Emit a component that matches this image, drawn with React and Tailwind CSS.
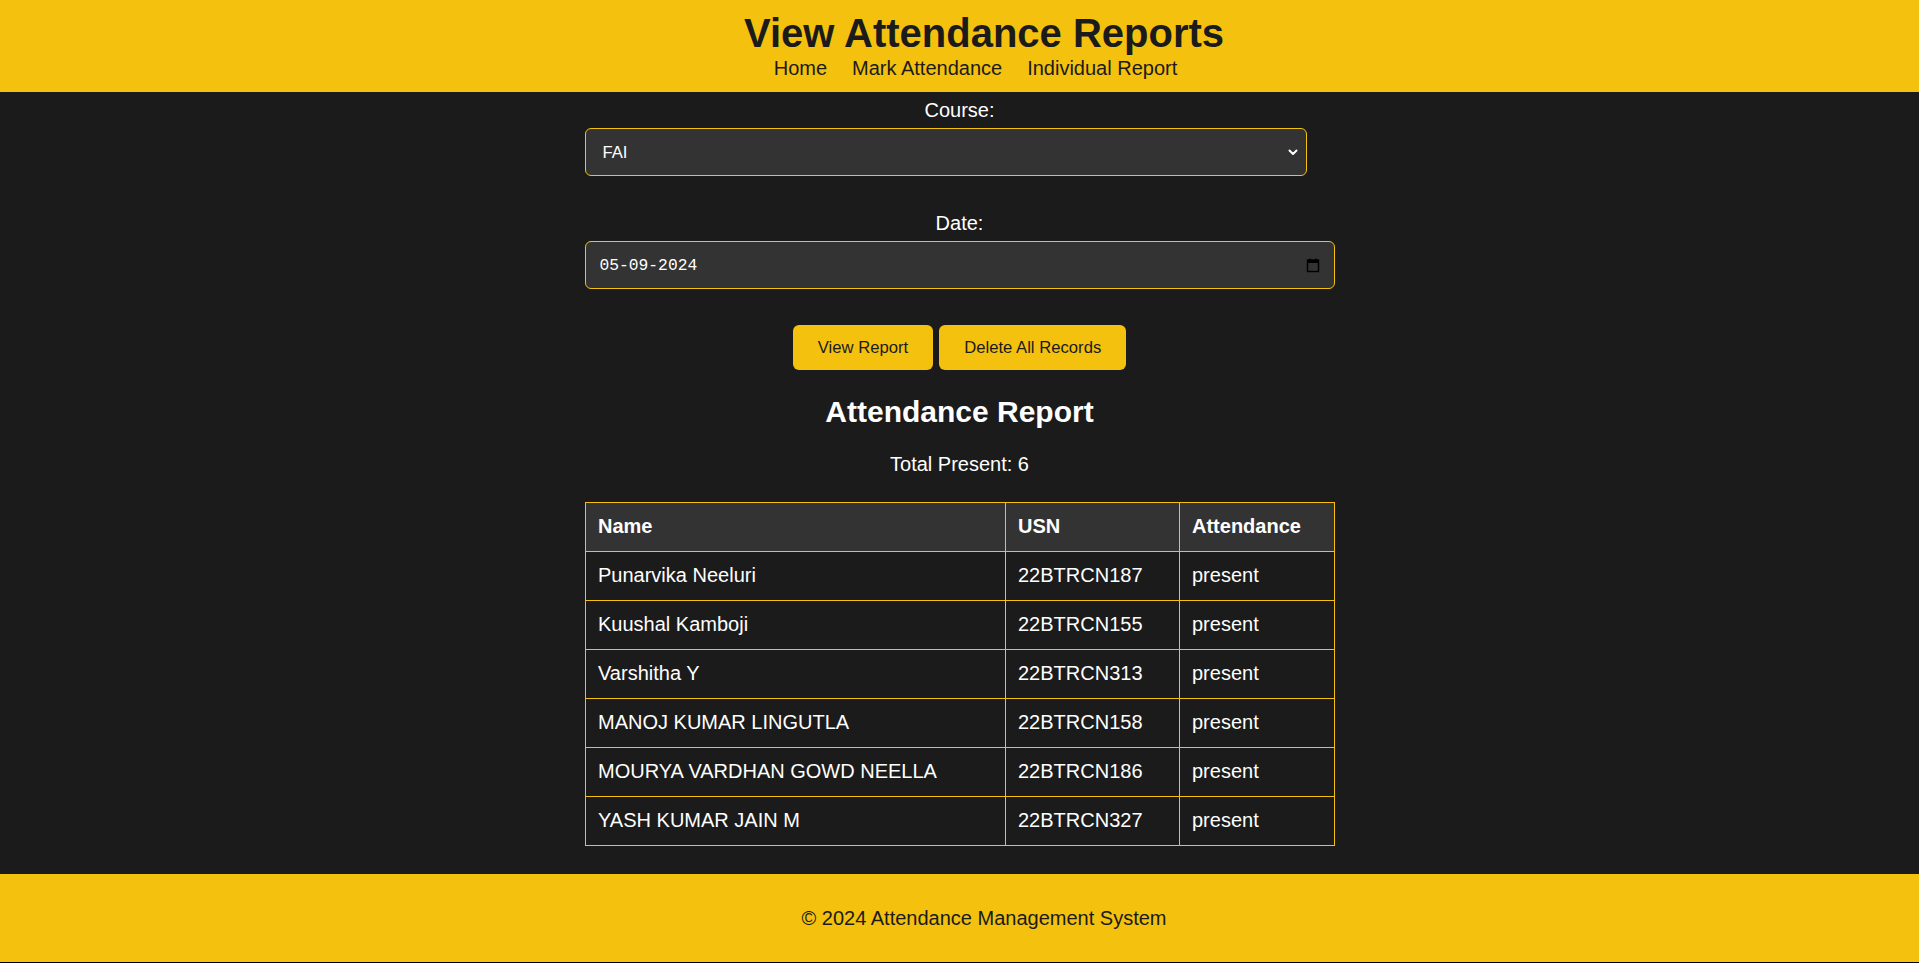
const rows = [
  { name: 'Punarvika Neeluri', usn: '22BTRCN187', status: 'present' },
  { name: 'Kuushal Kamboji', usn: '22BTRCN155', status: 'present' },
  { name: 'Varshitha Y', usn: '22BTRCN313', status: 'present' },
  { name: 'MANOJ KUMAR LINGUTLA', usn: '22BTRCN158', status: 'present' },
  { name: 'MOURYA VARDHAN GOWD NEELLA', usn: '22BTRCN186', status: 'present' },
  { name: 'YASH KUMAR JAIN M', usn: '22BTRCN327', status: 'present' },
]

function Chevron() {
  return (
    <svg width="10" height="7" viewBox="0 0 10 7" fill="none">
      <path d="M1.5 1.5 L5 5 L8.5 1.5" stroke="#ffffff" strokeWidth="2" strokeLinecap="round" strokeLinejoin="round" />
    </svg>
  )
}

function CalendarIcon() {
  return (
    <svg width="14" height="16" viewBox="0 0 14 16" fill="none">
      <rect x="1.5" y="3" width="11" height="11.5" stroke="#000000" strokeWidth="1.4" />
      <rect x="1.5" y="3" width="11" height="3" fill="#000000" />
      <path d="M4 1.5 V3.5 M10 1.5 V3.5" stroke="#000000" strokeWidth="1.4" />
    </svg>
  )
}

export default function App() {
  return (
    <div className="bg-black pb-px font-['Liberation_Sans',Arial,sans-serif]">
      <header className="bg-[#f4c10f] text-[#1b1b1b] pt-[10px] pb-[12px] text-center">
        <h1 className="text-[40px] leading-[46px] font-bold pl-[49px]">View Attendance Reports</h1>
        <nav className="flex justify-center gap-[25px] text-[20px] leading-[23px] pt-[1px] pl-[32px]">
          <a href="#">Home</a>
          <a href="#">Mark Attendance</a>
          <a href="#">Individual Report</a>
        </nav>
      </header>

      <main className="bg-[#1b1b1b] text-white pt-[7px] pb-[28px]">
        <div className="w-[750px] mx-auto">
          <div className="text-[20px] leading-[23px] text-center mb-[6px]">Course:</div>
          <div className="w-[722px] h-[48px] bg-[#333333] border border-[#f4c10f] rounded-[6px] flex items-center justify-between pl-[17px] pr-[8px] text-[16.67px]">
            <span>FAI</span>
            <Chevron />
          </div>

          <div className="text-[20px] leading-[23px] text-center mt-[36px] mb-[6px]">Date:</div>
          <div className="w-full h-[48px] bg-[#333333] border border-[#f4c10f] rounded-[6px] flex items-center justify-between pl-[14px] pr-[14px] text-[16.3px] font-['Liberation_Mono','DejaVu_Sans_Mono',monospace]">
            <span className="pt-[2px]">05-09-2024</span>
            <CalendarIcon />
          </div>

          <div className="flex justify-center gap-[6px] mt-[36px]">
            <button className="bg-[#f4c10f] text-[#1b1b1b] rounded-[6px] h-[45px] px-[25px] text-[16.67px]">View Report</button>
            <button className="bg-[#f4c10f] text-[#1b1b1b] rounded-[6px] h-[45px] px-[25px] text-[16.67px]">Delete All Records</button>
          </div>

          <h2 className="text-[30px] leading-[35px] font-bold text-center mt-[24px]">Attendance Report</h2>
          <p className="text-[20px] leading-[23px] text-center mt-[24px]">Total Present: 6</p>

          <table className="w-[750px] table-fixed border-collapse mt-[26px] text-[20px] leading-[23px]">
            <thead>
              <tr className="bg-[#333333]">
                <th className="w-[420px] border border-[#f4c10f] px-[12.5px] pt-[12px] pb-[13px] text-left font-bold">Name</th>
                <th className="w-[174px] border border-[#f4c10f] px-[12.5px] pt-[12px] pb-[13px] text-left font-bold">USN</th>
                <th className="border border-[#f4c10f] px-[12.5px] pt-[12px] pb-[13px] text-left font-bold">Attendance</th>
              </tr>
            </thead>
            <tbody>
              {rows.map((r) => (
                <tr key={r.usn}>
                  <td className="border border-[#f4c10f] px-[12.5px] pt-[12px] pb-[13px]">{r.name}</td>
                  <td className="border border-[#f4c10f] px-[12.5px] pt-[12px] pb-[13px]">{r.usn}</td>
                  <td className="border border-[#f4c10f] px-[12.5px] pt-[12px] pb-[13px]">{r.status}</td>
                </tr>
              ))}
            </tbody>
          </table>
        </div>
      </main>

      <footer className="bg-[#f4c10f] text-[#1b1b1b] text-center py-[32.5px] pl-[49px] text-[20px] leading-[23px]">
        © 2024 Attendance Management System
      </footer>
    </div>
  )
}
